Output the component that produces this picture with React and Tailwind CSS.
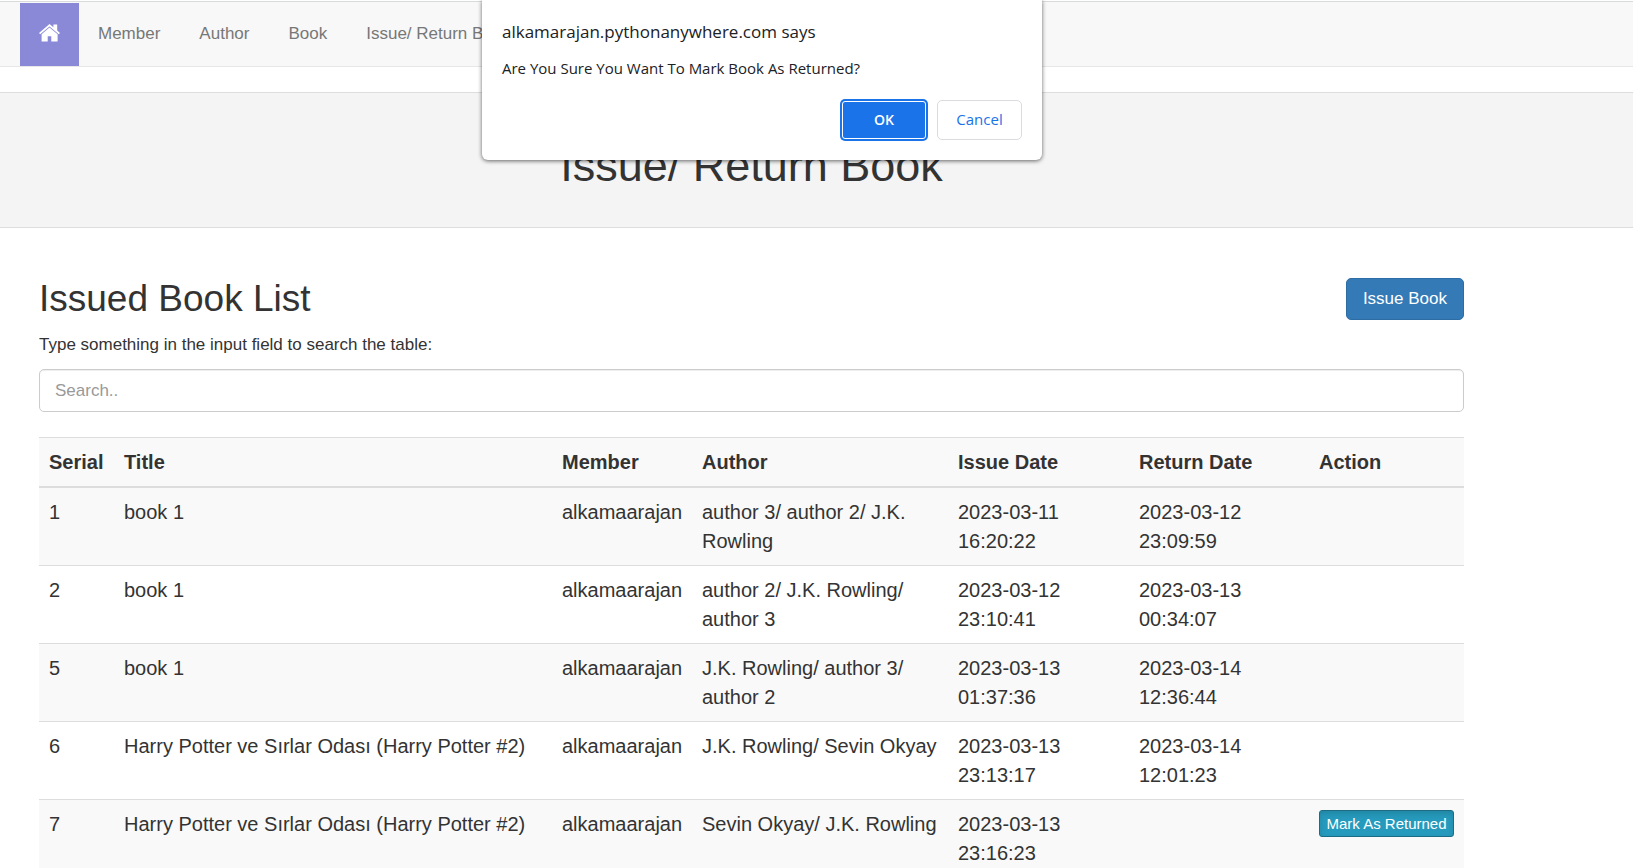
import React from "react";

const navLinks = ["Member", "Author", "Book", "Issue/ Return Book"];

const rows = [
  { serial: 1, title: "book 1", author: "author 3/ author 2/ J.K. Rowling", issued: "2023-03-11 16:20:22", returned: "2023-03-12 23:09:59" },
  { serial: 2, title: "book 1", author: "author 2/ J.K. Rowling/ author 3", issued: "2023-03-12 23:10:41", returned: "2023-03-13 00:34:07" },
  { serial: 5, title: "book 1", author: "J.K. Rowling/ author 3/ author 2", issued: "2023-03-13 01:37:36", returned: "2023-03-14 12:36:44" },
  { serial: 6, title: "Harry Potter ve Sırlar Odası (Harry Potter #2)", author: "J.K. Rowling/ Sevin Okyay", issued: "2023-03-13 23:13:17", returned: "2023-03-14 12:01:23" },
  { serial: 7, title: "Harry Potter ve Sırlar Odası (Harry Potter #2)", author: "Sevin Okyay/ J.K. Rowling", issued: "2023-03-13 23:16:23", returned: "" },
];

function HomeIcon() {
  return (
    <svg viewBox="0 0 21 18" className="h-[18px] w-[21px]" fill="currentColor" aria-hidden="true">
      <path d="M10.5 0 L14.4 3.3 V0.5 H18.2 V6.5 L21 8.9 L19.8 10.2 L10.5 2.6 L1.2 10.2 L0 8.9 Z" />
      <path d="M10.5 3.5 L18.6 10.2 V17.6 H12.3 V12.2 H8.7 V17.6 H2.6 V10.2 Z" />
    </svg>
  );
}

function Navbar() {
  return (
    <nav className="border-t border-b border-t-[#d9dbdb] border-b-[#e7e7e7] bg-[#f8f8f8] px-5 pt-px">
      <ul className="flex text-[17px] leading-[25px] text-[#777]">
        <li>
          <a href="#home" aria-label="Home" className="flex h-[63px] w-[59px] items-center justify-center bg-[#8989d8] pb-1 text-white">
            <HomeIcon />
          </a>
        </li>
        {navLinks.map((label) => (
          <li key={label}>
            <a href="#nav" className="block pt-[18px] pr-5 pb-5 pl-[19px]">{label}</a>
          </li>
        ))}
      </ul>
    </nav>
  );
}

function ConfirmDialog() {
  return (
    <div
      role="alertdialog"
      aria-labelledby="dialog-title"
      aria-describedby="dialog-message"
      className="absolute top-0 left-[482px] w-[560px] rounded-b-md bg-white px-5 pt-[19px] pb-5 font-['Open_Sans',sans-serif] text-[#202124] shadow-[0_1px_4px_rgba(0,0,0,0.6)]"
    >
      <h2 id="dialog-title" className="text-[17px] leading-[26px]">alkamarajan.pythonanywhere.com says</h2>
      <p id="dialog-message" className="mt-3 text-[15px] leading-[22px]">Are You Sure You Want To Mark Book As Returned?</p>
      <div className="mt-[21px] flex items-center justify-end gap-[11px]">
        <button type="button" className="h-[38px] w-[84px] rounded-[3px] bg-[#1a73e8] pb-0.5 text-[14px] font-semibold text-white ring-2 ring-[#1a73e8] outline-1 -outline-offset-1 outline-white">OK</button>
        <button type="button" className="h-10 w-[85px] rounded-[5px] border border-[#dadce0] pb-0.5 text-[15px] font-medium text-[#1a73e8]">Cancel</button>
      </div>
    </div>
  );
}

function BookTable() {
  return (
    <table className="w-full table-fixed border-collapse text-left text-[20px] leading-[29px]">
      <colgroup>
        <col className="w-[75px]" />
        <col />
        <col className="w-[140px]" />
        <col className="w-[256px]" />
        <col className="w-[181px]" />
        <col className="w-[180px]" />
        <col className="w-[155px]" />
      </colgroup>
      <thead>
        <tr className="border-t border-b-2 border-[#ddd] bg-[#f9f9f9]">
          {["Serial", "Title", "Member", "Author", "Issue Date", "Return Date", "Action"].map((h) => (
            <th key={h} scope="col" className="px-[10px] pt-[10px] pb-[9px] font-bold">{h}</th>
          ))}
        </tr>
      </thead>
      <tbody>
        {rows.map((r) => (
          <tr key={r.serial} className="border-b border-[#ddd] align-top odd:bg-[#f9f9f9]">
            <td className="px-[10px] pt-[10px] pb-[9px]">{r.serial}</td>
            <td className="px-[10px] pt-[10px] pb-[9px]">{r.title}</td>
            <td className="px-[10px] pt-[10px] pb-[9px]">alkamaarajan</td>
            <td className="px-[10px] pt-[10px] pb-[9px]">{r.author}</td>
            <td className="px-[10px] pt-[10px] pb-[9px]">{r.issued}</td>
            <td className="px-[10px] pt-[10px] pb-[9px]">{r.returned}</td>
            <td className="px-[10px] pt-[10px] pb-[9px]">
              {!r.returned && (
                <button type="button" className="block h-[27px] w-full rounded-[3px] border border-[#1b6d85] bg-[#269abc] text-[15px] leading-[22px] whitespace-nowrap text-white shadow-[inset_0_3px_5px_rgba(0,0,0,0.125)]">
                  Mark As Returned
                </button>
              )}
            </td>
          </tr>
        ))}
      </tbody>
    </table>
  );
}

export default function App() {
  return (
    <div className="relative h-screen overflow-y-auto bg-white pt-px font-['Liberation_Sans',Arial,sans-serif] text-[#333] [scrollbar-width:none]">
      <Navbar />
      <header className="mt-[25px] border-t border-b border-[#ddd] bg-[#f4f4f4] px-5">
        <h1 className="max-w-[1463px] pt-12 pb-9 text-center text-[45px] leading-[50px]">Issue/ Return Book</h1>
      </header>
      <main className="mx-5 max-w-[1463px] px-[19px] pt-[50px]">
        <div className="flex items-start justify-between">
          <h2 className="text-[37px] leading-[41px]">Issued Book List</h2>
          <button type="button" className="h-[42px] rounded-[5px] border border-[#2e6da4] bg-[#337ab7] px-4 text-[17px] text-white">Issue Book</button>
        </div>
        <label htmlFor="search" className="mt-3 block text-[17px] leading-[25px]">Type something in the input field to search the table:</label>
        <input
          id="search"
          type="text"
          placeholder="Search.."
          className="mt-3 mb-[25px] block h-[43px] w-full rounded-[5px] border border-[#ccc] px-[15px] text-[17px] shadow-[inset_0_1px_1px_rgba(0,0,0,0.075)] placeholder:text-[#999]"
        />
        <BookTable />
      </main>
      <ConfirmDialog />
    </div>
  );
}
